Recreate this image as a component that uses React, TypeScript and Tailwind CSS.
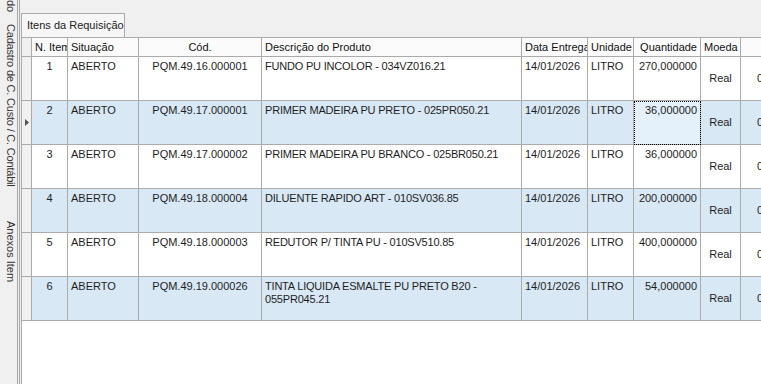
import React from "react";

// columns of the grid: width in px (each cell carries its own right border)
const cols = [
  { key: "item", title: "N. Item", w: "w-[36px]", head: "justify-start", body: "justify-center" },
  { key: "sit", title: "Situação", w: "w-[71px]", head: "justify-start", body: "justify-start" },
  { key: "cod", title: "Cód.", w: "w-[123px]", head: "justify-center", body: "justify-center" },
  { key: "desc", title: "Descrição do Produto", w: "w-[260px]", head: "justify-start", body: "justify-start" },
  { key: "data", title: "Data Entrega", w: "w-[66px]", head: "justify-start", body: "justify-start" },
  { key: "un", title: "Unidade", w: "w-[46px]", head: "justify-start", body: "justify-start" },
  { key: "qtd", title: "Quantidade", w: "w-[67px]", head: "justify-end", body: "justify-end" },
];

interface Row {
  item: string;
  sit: string;
  cod: string;
  desc: React.ReactNode;
  data: string;
  un: string;
  qtd: string;
}

const rows: Row[] = [
  { item: "1", sit: "ABERTO", cod: "PQM.49.16.000001", desc: "FUNDO PU INCOLOR - 034VZ016.21", data: "14/01/2026", un: "LITRO", qtd: "270,000000" },
  { item: "2", sit: "ABERTO", cod: "PQM.49.17.000001", desc: "PRIMER MADEIRA PU PRETO - 025PR050.21", data: "14/01/2026", un: "LITRO", qtd: "36,000000" },
  { item: "3", sit: "ABERTO", cod: "PQM.49.17.000002", desc: "PRIMER MADEIRA PU BRANCO - 025BR050.21", data: "14/01/2026", un: "LITRO", qtd: "36,000000" },
  { item: "4", sit: "ABERTO", cod: "PQM.49.18.000004", desc: "DILUENTE RAPIDO ART - 010SV036.85", data: "14/01/2026", un: "LITRO", qtd: "200,000000" },
  { item: "5", sit: "ABERTO", cod: "PQM.49.18.000003", desc: "REDUTOR P/ TINTA PU - 010SV510.85", data: "14/01/2026", un: "LITRO", qtd: "400,000000" },
  {
    item: "6",
    sit: "ABERTO",
    cod: "PQM.49.19.000026",
    desc: (
      <>
        TINTA LIQUIDA ESMALTE PU PRETO B20 -<br />
        055PR045.21
      </>
    ),
    data: "14/01/2026",
    un: "LITRO",
    qtd: "54,000000",
  },
];

function SideTabs() {
  return (
    <div className="w-[18px] shrink-0 border-r border-[#a8a8a8] flex flex-col overflow-hidden text-[#333]">
      <div className="[writing-mode:vertical-rl] -ml-[2px] leading-[13px] whitespace-nowrap">do</div>
      <div className="[writing-mode:vertical-rl] -ml-[2px] leading-[13px] whitespace-nowrap mt-[12px] tracking-[-0.2px]">
        Cadastro de C. Custo / C. Contábil
      </div>
      <div className="[writing-mode:vertical-rl] -ml-[2px] leading-[13px] whitespace-nowrap mt-[34px]">Anexos Item</div>
    </div>
  );
}

function Grid() {
  return (
    <div className="flex-1 bg-white border-l border-t border-[#ababab] overflow-hidden">
      {/* header */}
      <div className="flex h-[19px] bg-[#fbfbfb] text-[#111]">
        <div className="w-[10px] shrink-0 border-r border-b border-[#ababab] bg-[#f0f0f0]" />
        {cols.map((c) => (
          <div
            key={c.key}
            className={`${c.w} ${c.head} shrink-0 flex items-center px-[3px] border-r border-b border-[#ababab] overflow-hidden whitespace-nowrap`}
          >
            {c.title}
          </div>
        ))}
        <div className="w-[40px] shrink-0 flex items-center px-[3px] border-r border-b border-[#ababab]">Moeda</div>
        <div className="flex-1 border-b border-[#ababab]" />
      </div>

      {rows.map((r, i) => {
        const even = i % 2 === 1;
        const bg = even ? "bg-[#d9e8f5]" : "bg-white";
        const selected = i === 1;
        return (
          <div key={r.item} className={`flex h-[44px] ${bg} text-[#1e1e1e]`}>
            <div className="w-[10px] shrink-0 border-r border-b border-[#ababab] bg-[#f1f1f1] flex items-center justify-center">
              {selected && (
                <svg width="4" height="7" viewBox="0 0 4 7">
                  <path d="M0 0 L4 3.5 L0 7 Z" fill="#555" />
                </svg>
              )}
            </div>
            {cols.map((c) => {
              const focus = selected && c.key === "qtd";
              return (
                <div
                  key={c.key}
                  className={`${c.w} ${c.body} shrink-0 flex items-start px-[3px] pt-[3px] leading-[13px] border-r border-b border-[#ababab] overflow-hidden ${
                    focus ? "bg-[#e4f0fa] outline-1 outline-dotted outline-black -outline-offset-1" : ""
                  }`}
                >
                  <span className={c.key === "desc" ? "tracking-[-0.2px]" : "whitespace-nowrap"}>
                    {r[c.key as keyof Row]}
                  </span>
                </div>
              );
            })}
            <div className="w-[40px] shrink-0 flex items-center justify-center border-r border-b border-[#ababab]">
              Real
            </div>
            <div className="flex-1 flex items-center pl-[16px] border-b border-[#ababab] whitespace-nowrap overflow-hidden">
              0,00
            </div>
          </div>
        );
      })}
    </div>
  );
}

export default function App() {
  return (
    <div className="w-[761px] h-[384px] bg-[#f0f0f0] flex overflow-hidden font-['Liberation_Sans',Arial,sans-serif] text-[11px]">
      <SideTabs />
      <div className="ml-[1px] border-l border-[#a8a8a8] flex-1 flex flex-col pt-[13px] pl-[1px] min-w-0">
        <div className="flex">
          <div className="h-[24px] w-[104px] border border-b-0 border-[#ababab] bg-[#f6f6f6] flex items-center pl-[5px] text-[#222] whitespace-nowrap">
            Itens da Requisição
          </div>
        </div>
        <Grid />
      </div>
    </div>
  );
}
